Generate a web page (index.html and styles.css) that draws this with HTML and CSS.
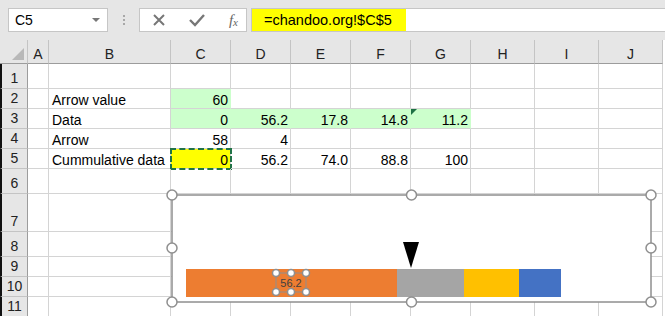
FILE: index.html
```html
<!DOCTYPE html>
<html lang="en">

<head>
    <meta charset="UTF-8">
    <meta name="viewport" content="width=device-width, initial-scale=1.0">
    <title>Cummulative data</title>
    <link rel="stylesheet" href="styles.css">
</head>

<body>
    <div class="toolbar">
        <div class="namebox">C5<span class="caret"></span></div>
        <div class="dots"><i></i><i></i><i></i></div>
        <div class="buttons">
            <svg width="14" height="14" viewBox="0 0 14 14"><path d="M2 2 L12 12 M12 2 L2 12" stroke="#777" stroke-width="2" fill="none"/></svg>
            <svg width="18" height="14" viewBox="0 0 18 14"><path d="M2 7 L7 12 L16 2" stroke="#777" stroke-width="2.4" fill="none"/></svg>
            <span class="fx">f<sub>x</sub></span>
        </div>
        <div class="formula"><span class="hl">=chandoo.org!$C$5</span></div>
    </div>

    <div class="sheet">
        <div class="grid">
            <div class="hd corner"><span class="tri"></span></div>
            <div class="hd">A</div><div class="hd">B</div><div class="hd">C</div><div class="hd">D</div><div class="hd">E</div>
            <div class="hd">F</div><div class="hd">G</div><div class="hd">H</div><div class="hd">I</div><div class="hd">J</div>

            <div class="rh">1</div>
            <div></div><div></div><div></div><div></div><div></div><div></div><div></div><div></div><div></div><div></div>

            <div class="rh">2</div>
            <div></div><div class="txt">Arrow value</div><div class="num green">60</div><div></div><div></div><div></div><div></div><div></div><div></div><div></div>

            <div class="rh">3</div>
            <div></div><div class="txt">Data</div><div class="num green">0</div><div class="num green">56.2</div><div class="num green">17.8</div><div class="num green">14.8</div><div class="num green flag">11.2</div><div></div><div></div><div></div>

            <div class="rh">4</div>
            <div></div><div class="txt">Arrow</div><div class="num">58</div><div class="num">4</div><div></div><div></div><div></div><div></div><div></div><div></div>

            <div class="rh">5</div>
            <div></div><div class="txt">Cummulative data</div><div class="num active">0</div><div class="num">56.2</div><div class="num">74.0</div><div class="num">88.8</div><div class="num">100</div><div></div><div></div><div></div>

            <div class="rh">6</div>
            <div></div><div></div><div></div><div></div><div></div><div></div><div></div><div></div><div></div><div></div>

            <div class="rh">7</div>
            <div></div><div></div><div></div><div></div><div></div><div></div><div></div><div></div><div></div><div></div>

            <div class="rh">8</div>
            <div></div><div></div><div></div><div></div><div></div><div></div><div></div><div></div><div></div><div></div>

            <div class="rh">9</div>
            <div></div><div></div><div></div><div></div><div></div><div></div><div></div><div></div><div></div><div></div>

            <div class="rh">10</div>
            <div></div><div></div><div></div><div></div><div></div><div></div><div></div><div></div><div></div><div></div>

            <div class="rh">11</div>
            <div></div><div></div><div></div><div></div><div></div><div></div><div></div><div></div><div></div><div></div>
        </div>

        <!-- chart object floating over the cells -->
        <div class="chart">
            <svg width="491" height="119" viewBox="0 0 491 119">
                <rect x="6" y="6" width="479" height="107" fill="#fff" stroke="#8f8f8f" stroke-width="1.5"/>
                <rect x="20" y="80" width="211" height="28" fill="#ed7d31"/>
                <rect x="231" y="80" width="67" height="28" fill="#a5a5a5"/>
                <rect x="298" y="80" width="55" height="28" fill="#ffc000"/>
                <rect x="353" y="80" width="42" height="28" fill="#4472c4"/>
                <polygon points="237,53 253,53 245,79" fill="#000"/>
                <rect x="110" y="84" width="30" height="19" fill="none" stroke="#8f8f8f" stroke-width="1"/>
                <text x="125" y="98" text-anchor="middle" class="lbl">56.2</text>
                <g fill="#fff" stroke="#8f8f8f" stroke-width="1.5">
                    <circle cx="110" cy="84" r="3.5"/><circle cx="125" cy="84" r="3.5"/><circle cx="140" cy="84" r="3.5"/>
                    <circle cx="110" cy="103" r="3.5"/><circle cx="125" cy="103" r="3.5"/><circle cx="140" cy="103" r="3.5"/>
                </g>
                <g fill="#fff" stroke="#8f8f8f" stroke-width="1.5">
                    <circle cx="6" cy="6" r="5"/><circle cx="245.5" cy="6" r="5"/><circle cx="485" cy="6" r="5"/>
                    <circle cx="6" cy="59" r="5"/><circle cx="485" cy="59" r="5"/>
                    <circle cx="6" cy="113" r="5"/><circle cx="245.5" cy="113" r="5"/><circle cx="485" cy="113" r="5"/>
                </g>
            </svg>
        </div>
    </div>
</body>

</html>
```

FILE: styles.css
```css
body {
    margin: 0;
    font-family: "Liberation Sans", Arial, sans-serif;
    color: #000;
    background-color: #fff;
    overflow: hidden;
}

.toolbar {
    display: flex;
    align-items: center;
    height: 40px;
    padding-left: 8px;
    box-sizing: border-box;
    background-color: #e6e6e6;
}

.namebox {
    position: relative;
    width: 100px;
    height: 24px;
    box-sizing: border-box;
    border: 1px solid #c6c6c6;
    background-color: #fff;
    font-size: 14px;
    line-height: 23px;
    padding-left: 6px;
}

.caret {
    position: absolute;
    right: 7px;
    top: 9px;
    border-left: 4px solid transparent;
    border-right: 4px solid transparent;
    border-top: 4px solid #777;
}

.dots {
    display: flex;
    flex-direction: column;
    gap: 2px;
    margin-left: 15px;
    margin-right: 14px;
}

.dots i {
    width: 2px;
    height: 2px;
    background-color: #a8a8a8;
}

.buttons {
    display: flex;
    align-items: center;
    justify-content: space-between;
    width: 108px;
    height: 24px;
    box-sizing: border-box;
    border: 1px solid #c6c6c6;
    background-color: #fff;
    padding: 0 8px 0 12px;
}

.fx {
    font-family: "Liberation Serif", serif;
    font-style: italic;
    font-size: 15px;
    color: #666;
}

.fx sub {
    font-size: 11px;
    vertical-align: -1px;
}

.formula {
    flex: 1;
    height: 24px;
    box-sizing: border-box;
    margin-left: 4px;
    border: 1px solid #c6c6c6;
    border-right: none;
    background-color: #fff;
}

.formula .hl {
    display: inline-block;
    height: 22px;
    line-height: 23px;
    padding: 0 14px 0 12px;
    background-color: #ffff00;
    font-size: 14.5px;
}

.sheet {
    position: relative;
}

.grid {
    display: grid;
    grid-template-columns: 28px 21px 122px 60px 60px 60px 60px 60px 64px 64px 64px;
    grid-template-rows: 24px 25px 20px 20px 20px 20px 25px 38px 25px 20px 20px 20px;
    font-size: 14px;
}

.grid>div {
    box-sizing: border-box;
    border-right: 1px solid #d4d4d4;
    border-bottom: 1px solid #d4d4d4;
    line-height: 19px;
    padding-top: 2px;
    white-space: nowrap;
}

.grid>div.hd {
    background-color: #e6e6e6;
    border-right: 1px solid #c4c4c4;
    border-bottom: 1px solid #9c9c9c;
    text-align: center;
    line-height: 24px;
    color: #222;
}

.grid>div.corner {
    position: relative;
}

.tri {
    position: absolute;
    right: 3px;
    bottom: 3px;
    border-left: 12px solid transparent;
    border-bottom: 12px solid #b8b8b8;
}

.grid>div.rh {
    background-color: #e6e6e6;
    border-left: 2px solid #111;
    border-right: 1px solid #9c9c9c;
    border-bottom: 1px solid #c4c4c4;
    padding-top: 0;
    display: flex;
    align-items: flex-end;
    justify-content: center;
    color: #222;
}

.txt {
    padding-left: 3px;
}

.num {
    text-align: right;
    padding-right: 2px;
}

.grid>div.green {
    background-color: #ccffcc;
    border-right-color: #ccffcc;
}

.flag {
    position: relative;
}

.flag::before {
    content: "";
    position: absolute;
    left: 0;
    top: 0;
    border-top: 6px solid #1e7145;
    border-right: 6px solid transparent;
}

.grid>div.active {
    background-color: #ffff00;
    outline: 2px dashed #217346;
    outline-offset: -1px;
}

.chart {
    position: absolute;
    left: 166px;
    top: 149px;
}

.chart svg {
    display: block;
}

.lbl {
    font-family: "Liberation Sans", Arial, sans-serif;
    font-size: 11px;
    fill: #404040;
}
```
